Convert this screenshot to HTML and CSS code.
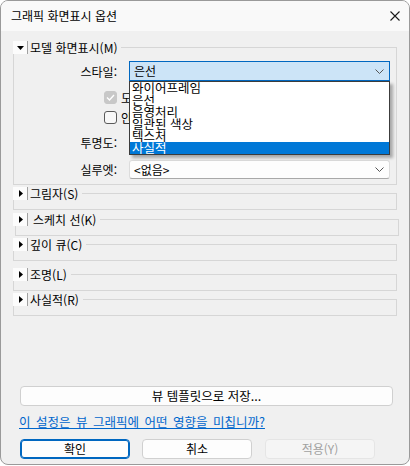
FILE: index.html
```html
<!DOCTYPE html>
<html lang="ko">
<head>
<meta charset="utf-8">
<link rel="stylesheet" href="styles.css">
</head>
<body>
<div class="window">
  <div class="titlebar">
    <span class="title">그래픽 화면표시 옵션</span>
    <svg class="close" width="10" height="10" viewBox="0 0 10 10"><path d="M0.5 0.5 L9.5 9.5 M9.5 0.5 L0.5 9.5" stroke="#1a1a1a" stroke-width="1.1" fill="none"/></svg>
  </div>
  <div class="main">
    <div class="panel">
      <div class="group open">
        <div class="ghead">
          <span class="toggle"><svg width="7" height="4" viewBox="0 0 7 4"><polygon points="0,0 7,0 3.5,4" fill="#000"/></svg></span>
          <span class="gtitle">모델 화면표시(M)</span>
          <span class="gline"></span>
        </div>
        <div class="gbody">
          <div class="row r-style">
            <span class="lbl">스타일:</span>
            <div class="combo focused">
              <span class="cval">은선</span>
              <svg class="chev" width="9" height="5" viewBox="0 0 9 5"><polyline points="0.5,0.5 4.5,4.5 8.5,0.5" stroke="#555" fill="none"/></svg>
              <ul class="list">
                <li>와이어프레임</li>
                <li>은선</li>
                <li>음영처리</li>
                <li>일관된 색상</li>
                <li>텍스처</li>
                <li class="sel">사실적</li>
              </ul>
            </div>
          </div>
          <div class="row r-check">
            <span class="cb checked disabled"><svg width="9" height="7" viewBox="0 0 9 7"><polyline points="1,3.5 3.5,6 8,1" stroke="#fff" stroke-width="1.4" fill="none"/></svg></span>
            <span class="cblabel">도면 모서리 표시</span>
          </div>
          <div class="row r-check">
            <span class="cb"></span>
            <span class="cblabel">안티앨리어싱으로 선 부드럽게 처리</span>
          </div>
          <div class="row r-trans">
            <span class="lbl">투명도:</span>
          </div>
          <div class="row r-sil">
            <span class="lbl">실루엣:</span>
            <div class="combo plain">
              <span class="cval">&lt;없음&gt;</span>
              <svg class="chev" width="9" height="5" viewBox="0 0 9 5"><polyline points="0.5,0.5 4.5,4.5 8.5,0.5" stroke="#555" fill="none"/></svg>
            </div>
          </div>
        </div>
      </div>
      <div class="group g-shadow">
        <div class="ghead">
          <span class="toggle"><svg width="4" height="7" viewBox="0 0 4 7"><polygon points="0,0 4,3.5 0,7" fill="#000"/></svg></span>
          <span class="gtitle">그림자(S)</span>
          <span class="gline"></span>
        </div>
        <div class="gbody"></div>
      </div>
      <div class="group g-sketch">
        <div class="ghead">
          <span class="toggle"><svg width="4" height="7" viewBox="0 0 4 7"><polygon points="0,0 4,3.5 0,7" fill="#000"/></svg></span>
          <span class="gtitle">스케치 선(K)</span>
          <span class="gline"></span>
        </div>
        <div class="gbody"></div>
      </div>
      <div class="group g-depth">
        <div class="ghead">
          <span class="toggle"><svg width="4" height="7" viewBox="0 0 4 7"><polygon points="0,0 4,3.5 0,7" fill="#000"/></svg></span>
          <span class="gtitle">깊이 큐(C)</span>
          <span class="gline"></span>
        </div>
        <div class="gbody"></div>
      </div>
      <div class="group g-light">
        <div class="ghead">
          <span class="toggle"><svg width="4" height="7" viewBox="0 0 4 7"><polygon points="0,0 4,3.5 0,7" fill="#000"/></svg></span>
          <span class="gtitle">조명(L)</span>
          <span class="gline"></span>
        </div>
        <div class="gbody"></div>
      </div>
      <div class="group g-real">
        <div class="ghead">
          <span class="toggle"><svg width="4" height="7" viewBox="0 0 4 7"><polygon points="0,0 4,3.5 0,7" fill="#000"/></svg></span>
          <span class="gtitle">사실적(R)</span>
          <span class="gline"></span>
        </div>
        <div class="gbody"></div>
      </div>
    </div>
    <div class="footer">
      <button class="btn wide">뷰 템플릿으로 저장...</button>
      <a class="link" href="#">이 설정은 뷰 그래픽에 어떤 영향을 미칩니까?</a>
      <div class="actions">
        <button class="btn default">확인</button>
        <button class="btn">취소</button>
        <button class="btn disabled apply">적용(Y)</button>
      </div>
    </div>
  </div>
</div>
</body>
</html>
```

FILE: styles.css
```css
* { box-sizing: border-box; }
html, body { margin: 0; padding: 0; background: #ffffff; }
body {
  font-family: "Noto Sans CJK KR", "Noto Sans", sans-serif;
  font-size: 12px;
  color: #000;
}
.window {
  width: 410px;
  height: 465px;
  border: 1px solid #9a9a9a;
  border-radius: 8px;
  overflow: hidden;
  display: flex;
  flex-direction: column;
  background: #f0f0f0;
}
.titlebar {
  height: 30px;
  flex: none;
  background: #f9f9f9;
  display: flex;
  align-items: center;
  padding-left: 10px;
}
.title { flex: 1; line-height: 16px; }
.close { margin-right: 9px; flex: none; }

.main {
  flex: 1;
  display: flex;
  flex-direction: column;
  padding: 10px 12px 5px 12px;
}
.panel { display: flex; flex-direction: column; }

.ghead { display: flex; height: 13px; }
.toggle {
  flex: none;
  width: 15px;
  height: 13px;
  background: #fcfcfc;
  border-right: 1px solid #a0a0a0;
  display: flex;
  align-items: center;
  justify-content: center;
  padding-left: 1px;
}
.gtitle {
  padding: 0 4px 0 2px;
  line-height: 13px;
  white-space: nowrap;
}
.gline {
  flex: 1;
  margin-top: 6px;
  border-top: 1px solid #d6d6d6;
  border-right: 1px solid #d6d6d6;
}
.gbody {
  border: 1px solid #d6d6d6;
  border-top: none;
  height: 10px;
}

.g-shadow { margin-top: 2px; }
.g-sketch { margin-top: 3px; }
.g-sketch .gtitle { padding-left: 5px; }
.g-sketch .gline { margin-right: -2px; }
.g-sketch .gbody { margin-left: 2px; margin-right: -2px; }
.g-depth { margin-top: 2px; }
.g-light { margin-top: 7px; }
.g-real { margin-top: 2px; }

.open .gbody {
  height: auto;
  padding: 7px 6px 5px 0;
}
.row { display: flex; align-items: center; }
.lbl {
  flex: none;
  width: 103px;
  margin-right: 12px;
  text-align: right;
}
.r-style { height: 20px; }
.r-check { height: 20px; padding-left: 90px; }
.r-style + .r-check { margin-top: 6px; }
.r-trans { height: 30px; }
.r-sil { height: 19px; margin-top: 3px; }

.combo {
  position: relative;
  flex: none;
  width: 261px;
  height: 100%;
  display: flex;
  align-items: center;
  padding: 0 5px 0 4px;
}
.combo.focused {
  background: #cce4f7;
  border: 1px solid #0067c0;
}
.combo.plain {
  background: #fdfdfd;
  border: 1px solid #dcdcdc;
  border-bottom-color: #a8a8a8;
  border-radius: 3px;
}
.cval { flex: 1; line-height: 16px; }
.chev { flex: none; }

.list {
  position: absolute;
  top: 19px;
  left: -1px;
  width: 261px;
  margin: 0;
  padding: 0;
  list-style: none;
  background: #fff;
  border: 1px solid #3c3c3c;
  box-shadow: 3px 3px 3px rgba(0, 0, 0, 0.3);
  z-index: 5;
}
.list li {
  height: 12px;
  line-height: 12px;
  padding-left: 2px;
  white-space: nowrap;
  font-size: 12.5px;
}
.list li.sel { background: #0078d7; color: #fff; }

.cb {
  flex: none;
  width: 13px;
  height: 13px;
  border: 1px solid #5a5a5a;
  border-radius: 3px;
  background: #f8f8f8;
  display: flex;
  align-items: center;
  justify-content: center;
}
.cb.checked.disabled { background: #c8c8c8; border-color: #c8c8c8; }
.cblabel { margin-left: 4px; white-space: nowrap; }

.footer {
  margin-top: auto;
  padding: 0 4px 0 7px;
  display: flex;
  flex-direction: column;
}
.btn {
  height: 20px;
  border: 1px solid #d0d0d0;
  border-radius: 4px;
  background: #fdfdfd;
  font: inherit;
  color: #000;
  padding: 0;
  line-height: 18px;
}
.btn.wide { font-size: 12.5px; }
.link {
  margin: 8px 0 9px -1px;
  line-height: 16px;
  font-size: 12.5px;
  word-spacing: 2px;
  color: #0066cc;
  text-decoration: underline;
  align-self: flex-start;
}
.actions { display: flex; gap: 12px; }
.actions .btn { width: 110px; }
.btn.default { border-color: #0067c0; box-shadow: inset 0 0 0 1px #0067c0; }
.btn.disabled { background: #f5f5f5; border-color: #e5e5e5; color: #a0a0a0; }
.btn.apply { margin-left: 1px; }
```
